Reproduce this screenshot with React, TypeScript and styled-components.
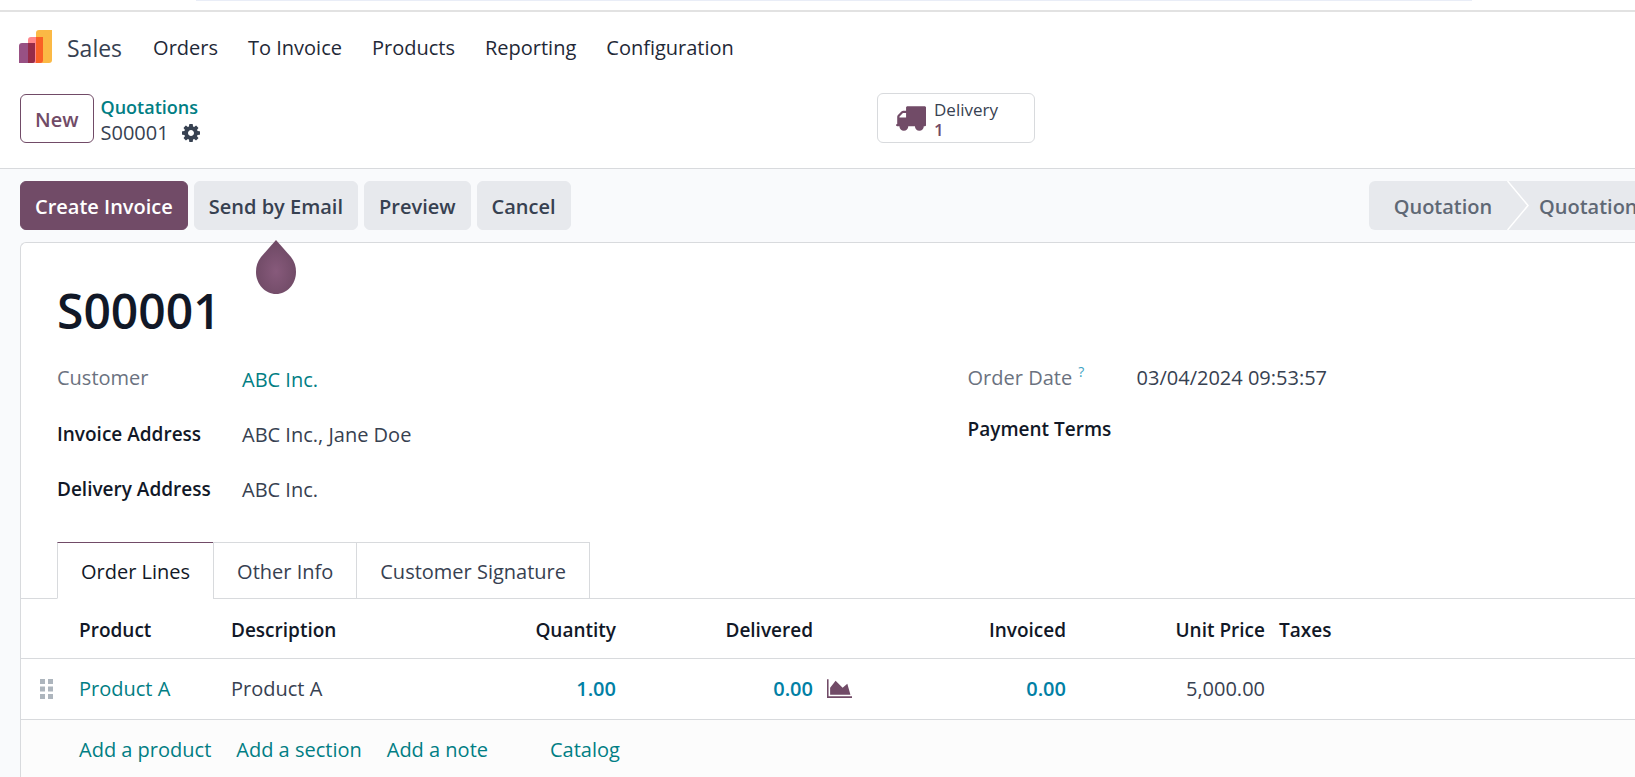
import React from "react";
import styled, { createGlobalStyle, css } from "styled-components";

const color = {
  brand: "#714b67",
  link: "#017e84",
  info: "#0180a5",
  text: "#374151",
  strong: "#111827",
  muted: "#6b7280",
  line: "#d8dadd",
  soft: "#e7e9ed",
  page: "#f9fafc",
};

const GlobalStyle = createGlobalStyle`
  *, *::before, *::after { box-sizing: border-box; }
  body {
    margin: 0;
    background: ${color.page};
    color: ${color.text};
    font-family: "Open Sans", "Noto Sans", sans-serif;
    font-size: 20px;
    line-height: 28px;
    overflow: hidden;
  }
  button { font: inherit; color: inherit; cursor: pointer; }
  a { color: ${color.link}; text-decoration: none; }
`;

const Page = styled.div`
  min-height: 100vh;
  display: flex;
  flex-direction: column;
  overflow: hidden;
`;

const BrowserEdge = styled.div`
  height: 12px;
  flex: none;
  padding: 0 10% 0 12%;
  background: #fff;
  border-bottom: 2px solid #e2e2e2;
`;

const AddressBar = styled.div`
  height: 1px;
  background: #e9edf7;
`;

const NavBar = styled.header`
  display: flex;
  align-items: center;
  height: 72px;
  padding: 0 19px;
  background: #fff;
`;

const AppName = styled.a`
  display: flex;
  align-items: center;
  gap: 15px;
  margin-right: 31px;
  color: ${color.text};
  font-size: 23px;
  svg { margin-bottom: 3px; }
`;

const Menu = styled.nav`
  display: flex;
  gap: 30px;
`;

const MenuItem = styled.button`
  padding: 0;
  border: 0;
  background: none;
  color: #1f2937;
  white-space: nowrap;
`;

const ControlPanel = styled.div`
  display: grid;
  grid-template-columns: 857fr 158px 580fr;
  align-items: start;
  height: 85px;
  padding: 9px 20px 0;
  background: #fff;
  border-bottom: 1px solid ${color.line};
`;

const Crumbs = styled.div`
  display: flex;
  gap: 7px;
  padding-top: 1px;
`;

const Button = styled.button<{ $kind?: "primary" | "outline" }>`
  height: 49px;
  padding: 2px 14px 0;
  border: 1px solid ${color.soft};
  border-radius: 6px;
  background: ${color.soft};
  font-weight: 600;
  white-space: nowrap;
  ${(p) =>
    p.$kind === "primary" &&
    css`
      background: ${color.brand};
      border-color: ${color.brand};
      color: #fff;
    `}
  ${(p) =>
    p.$kind === "outline" &&
    css`
      background: #fff;
      border-color: ${color.brand};
      color: ${color.brand};
    `}
`;

const Trail = styled.div`
  display: flex;
  flex-direction: column;
  line-height: 26px;
  a { font-size: 18px; font-weight: 600; }
`;

const Current = styled.div`
  display: flex;
  align-items: center;
  gap: 13px;
`;

const IconButton = styled.button`
  display: flex;
  padding: 0;
  border: 0;
  background: none;
`;

const ForecastButton = styled(IconButton)`
  color: ${color.brand};
`;

const StatButton = styled.button`
  display: flex;
  align-items: center;
  gap: 8px;
  height: 50px;
  padding: 0 17px;
  border: 1px solid ${color.line};
  border-radius: 6px;
  background: #fff;
  color: ${color.brand};
`;

const StatText = styled.span`
  display: flex;
  flex-direction: column;
  padding-top: 3px;
  text-align: left;
  font-size: 17px;
  line-height: 20px;
`;

const StatLabel = styled.span`
  color: ${color.text};
`;

const StatValue = styled.span`
  font-weight: 600;
`;

const ActionBar = styled.div`
  display: flex;
  justify-content: space-between;
  padding: 12px 0 12px 20px;
`;

const Actions = styled.div`
  display: flex;
  gap: 6px;
`;

const TipAnchor = styled.div`
  position: relative;
  display: flex;
`;

const Tip = styled.svg`
  position: absolute;
  top: 59px;
  left: 50%;
  margin-left: -20px;
`;

const StatusBar = styled.div`
  display: flex;
  width: 266px;
  overflow: hidden;
  background: ${color.soft};
  border-radius: 6px 0 0 6px;
`;

const StageArrow = styled.svg`
  flex: none;
`;

const Stage = styled.button`
  flex: none;
  padding: 2px 10px 0;
  border: 0;
  background: none;
  color: #5f6875;
  font-weight: 600;
`;

const StageFirst = styled(Stage)`
  width: 138px;
  padding: 2px 0 0 10px;
`;

const Sheet = styled.main`
  flex: 1;
  margin-left: 20px;
  background: #fff;
  border: 1px solid ${color.line};
  border-width: 1px 0 0 1px;
  border-radius: 6px 0 0 0;
`;

const Title = styled.h1`
  margin: 0;
  padding: 38px 36px 0;
  color: ${color.strong};
  font-size: 48px;
  line-height: 60px;
  font-weight: 600;
`;

const Fields = styled.div`
  display: grid;
  grid-template-columns: 910fr 667fr;
  padding: 23px 0 0 36px;
`;

const FieldList = styled.dl<{ $label: number; $gap: number }>`
  display: grid;
  grid-template-columns: ${(p) => p.$label}px 1fr;
  align-content: start;
  row-gap: ${(p) => p.$gap}px;
  margin: 0;
`;

const Label = styled.dt<{ $muted?: boolean }>`
  padding-top: ${(p) => (p.$muted ? 0 : 1)}px;
  color: ${(p) => (p.$muted ? color.muted : color.strong)};
  font-size: ${(p) => (p.$muted ? 20 : 19)}px;
  font-weight: ${(p) => (p.$muted ? 500 : 600)};
  white-space: nowrap;
`;

const Value = styled.dd`
  margin: 0;
`;

const Help = styled.sup`
  margin-left: 6px;
  color: #3ea3c3;
  font-size: 14px;
  line-height: 1;
`;

const CustomerFields = styled(FieldList)`
  ${Value} { padding-top: 2px; }
`;

const Tabs = styled.div`
  display: flex;
  margin-top: 38px;
  padding-left: 36px;
  border-bottom: 1px solid ${color.line};
`;

const Tab = styled.button<{ $active?: boolean }>`
  height: 57px;
  margin: 0 -1px -1px 0;
  padding: 2px 23px 0;
  border: 1px solid ${color.line};
  background: #fff;
  ${(p) =>
    p.$active &&
    css`
      border-top-color: ${color.brand};
      border-bottom-color: #fff;
      color: ${color.strong};
    `}
`;

const Lines = styled.table`
  width: 100%;
  table-layout: fixed;
  border-collapse: collapse;
`;

const Cell = styled.td<{ $right?: boolean; $metric?: boolean }>`
  height: 61px;
  padding: 0 7px;
  border-bottom: 1px solid ${color.line};
  text-align: ${(p) => (p.$right ? "right" : "left")};
  white-space: nowrap;
  ${(p) => p.$metric && css`color: ${color.info}; font-weight: 600;`}
`;

const HeadCell = styled(Cell).attrs({ as: "th" })`
  height: 59px;
  padding-top: 3px;
  color: ${color.strong};
  font-size: 19px;
  font-weight: 600;
`;

const Handle = styled.svg`
  display: block;
  margin-left: 12px;
`;

const AddRow = styled.div`
  display: flex;
  padding: 16px 58px;
  gap: 25px;
  background: #fcfcfc;
  white-space: nowrap;
  a:last-child { margin-left: 37px; }
`;

const TRUCK =
  "M640 128q0 -52 -38 -90t-90 -38t-90 38t-38 90t38 90t90 38t90 -38t38 -90zM256 640h384v256h-158q-13 0 -22 -9l-195 -195q-9 -9 -9 -22v-30zM1536 128q0 -52 -38 -90t-90 -38t-90 38t-38 90t38 90t90 38t90 -38t38 -90zM1792 1216v-1024q0 -15 -4 -26.500t-13.500 -18.500t-16.500 -11.500t-23.500 -6t-22.500 -2t-25.500 0t-22.500 0.500q0 -106 -75 -181t-181 -75t-181 75t-75 181h-384q0 -106 -75 -181t-181 -75t-181 75t-75 181h-64q-3 0 -22.500 -0.500t-25.500 0t-22.500 2t-23.500 6t-16.500 11.500t-13.500 18.500t-4 26.500q0 26 19 45t45 19v320q0 8 -0.500 35t0 38t2.500 34.500t6.500 37t14 30.500t22.500 30l198 198q19 19 50.500 32t58.500 13h160v192q0 26 19 45t45 19h1024q26 0 45 -19t19 -45z";
const COG =
  "M1024 640q0 106 -75 181t-181 75t-181 -75t-75 -181t75 -181t181 -75t181 75t75 181zM1536 749v-222q0 -12 -8 -23t-20 -13l-185 -28q-19 -54 -39 -91q35 -50 107 -138q10 -12 10 -25t-9 -23q-27 -37 -99 -108t-94 -71q-12 0 -26 9l-138 108q-44 -23 -91 -38q-16 -136 -29 -186q-7 -28 -36 -28h-222q-14 0 -24.500 8.500t-11.500 21.500l-28 184q-49 16 -90 37l-141 -107q-10 -9 -25 -9q-14 0 -25 11q-126 114 -165 168q-7 10 -7 23q0 12 8 23q15 21 51 66.500t54 70.500q-27 50 -41 99l-183 27q-13 2 -21 12.500t-8 23.500v222q0 12 8 23t19 13l186 28q14 46 39 92q-40 57 -107 138q-10 12 -10 24q0 10 9 23q26 36 98.500 107.500t94.500 71.500q13 0 26 -10l138 -107q44 23 91 38q16 136 29 186q7 28 36 28h222q14 0 24.500 -8.500t11.500 -21.500l28 -184q49 -16 90 -37l142 107q9 9 24 9q13 0 25 -10q129 -119 165 -170q7 -8 7 -22q0 -12 -8 -23q-15 -21 -51 -66.500t-54 -70.500q26 -50 41 -98l183 -28q13 -2 21 -12.500t8 -23.500z";
const AREA = "M2048 0v-128h-2048v1536h128v-1408h1920zM1664 1024l256 -896h-1664v576l448 576l576 -576z";

/* The icon outlines use a y-up grid, so each one is flipped into view. */
const Glyph = ({ d, box, w, h }: { d: string; box: string; w: number; h: number }) => (
  <svg width={w} height={h} viewBox={box} fill="currentColor" aria-hidden="true">
    <path d={d} transform="scale(1 -1)" />
  </svg>
);

const Logo = () => (
  <svg width="33" height="33" viewBox="0 0 33 33" aria-hidden="true">
    <path d="M20 0h13v30a3 3 0 0 1-3 3H17V3a3 3 0 0 1 3-3z" fill="#fbb945" />
    <path d="M12 7h12v23a3 3 0 0 1-3 3H9V10a3 3 0 0 1 3-3z" fill="#ff868b" />
    <path d="M3 13h13v17a3 3 0 0 1-3 3H0V16a3 3 0 0 1 3-3z" fill="#985184" />
    <path d="M9 13h7v17a3 3 0 0 1-3 3H9z" fill="#962b48" />
    <path d="M17 7h7v23a3 3 0 0 1-3 3h-4z" fill="#f96025" />
  </svg>
);

const menus = ["Orders", "To Invoice", "Products", "Reporting", "Configuration"];
const columns = [
  { name: "", width: 51 },
  { name: "Product", width: 152 },
  { name: "Description", width: 221 },
  { name: "Quantity", width: 178, right: true },
  { name: "Delivered", width: 197, right: true },
  { name: "", width: 54 },
  { name: "Invoiced", width: 199, right: true },
  { name: "Unit Price", width: 199, right: true },
  { name: "Taxes" },
];

export default function App() {
  return (
    <Page>
      <GlobalStyle />
      <BrowserEdge><AddressBar /></BrowserEdge>
      <NavBar>
        <AppName href="#sales"><Logo />Sales</AppName>
        <Menu>
          {menus.map((m) => <MenuItem key={m}>{m}</MenuItem>)}
        </Menu>
      </NavBar>
      <ControlPanel>
        <Crumbs>
          <Button $kind="outline">New</Button>
          <Trail>
            <a href="#quotations">Quotations</a>
            <Current>
              S00001
              <IconButton aria-label="Actions">
                <Glyph d={COG} box="0 -1408 1536 1536" w={18} h={18} />
              </IconButton>
            </Current>
          </Trail>
        </Crumbs>
        <StatButton>
          <Glyph d={TRUCK} box="0 -1280 1792 1408" w={31} h={25} />
          <StatText>
            <StatLabel>Delivery</StatLabel>
            <StatValue>1</StatValue>
          </StatText>
        </StatButton>
      </ControlPanel>
      <ActionBar>
        <Actions>
          <Button $kind="primary">Create Invoice</Button>
          <TipAnchor>
            <Button>Send by Email</Button>
            <Tip width="40" height="54" viewBox="0 0 40 54" aria-hidden="true">
              <defs>
                <radialGradient id="drop" cx="0.5" cy="0.58" r="0.5">
                  <stop offset="0" stopColor="#875a7b" />
                  <stop offset="1" stopColor="#714b67" />
                </radialGradient>
              </defs>
              <path d="M20 0L35 17C38.500 21.500 40 26 40 32C40 44 31 54 20 54S0 44 0 32C0 26 1.500 21.500 5 17Z" fill="url(#drop)" />
            </Tip>
          </TipAnchor>
          <Button>Preview</Button>
          <Button>Cancel</Button>
        </Actions>
        <StatusBar>
          <StageFirst>Quotation</StageFirst>
          <StageArrow width="22" height="49" viewBox="0 0 22 49" aria-hidden="true">
            <path d="M0.500 0L21 24.500L0.500 49" fill="none" stroke="#fff" strokeWidth="1.500" />
          </StageArrow>
          <Stage>Quotation</Stage>
        </StatusBar>
      </ActionBar>
      <Sheet>
        <Title>S00001</Title>
        <Fields>
          <CustomerFields $label={185} $gap={25}>
            <Label $muted>Customer</Label>
            <Value><a href="#customer">ABC Inc.</a></Value>
            <Label>Invoice Address</Label>
            <Value>ABC Inc., Jane Doe</Value>
            <Label>Delivery Address</Label>
            <Value>ABC Inc.</Value>
          </CustomerFields>
          <FieldList $label={169} $gap={22}>
            <Label $muted>Order Date<Help>?</Help></Label>
            <Value>03/04/2024 09:53:57</Value>
            <Label>Payment Terms</Label>
            <Value />
          </FieldList>
        </Fields>
        <Tabs role="tablist">
          <Tab role="tab" aria-selected="true" $active>Order Lines</Tab>
          <Tab role="tab">Other Info</Tab>
          <Tab role="tab">Customer Signature</Tab>
        </Tabs>
        <Lines>
          <colgroup>
            {columns.map((c, i) => <col key={i} width={c.width} />)}
          </colgroup>
          <thead>
            <tr>
              {columns.map((c, i) => <HeadCell key={i} $right={c.right}>{c.name}</HeadCell>)}
            </tr>
          </thead>
          <tbody>
            <tr>
              <Cell>
                <Handle width="13" height="20" viewBox="0 0 13 20" fill="#adb5bd" aria-hidden="true">
                  <path d="M0 0h5v5H0zM8 0h5v5H8zM0 7.500h5v5H0zM8 7.500h5v5H8zM0 15h5v5H0zM8 15h5v5H8z" />
                </Handle>
              </Cell>
              <Cell><a href="#product">Product A</a></Cell>
              <Cell>Product A</Cell>
              <Cell $right $metric>1.00</Cell>
              <Cell $right $metric>0.00</Cell>
              <Cell>
                <ForecastButton aria-label="Forecast">
                  <Glyph d={AREA} box="0 -1408 2048 1536" w={25} h={19} />
                </ForecastButton>
              </Cell>
              <Cell $right $metric>0.00</Cell>
              <Cell $right>5,000.00</Cell>
              <Cell />
            </tr>
          </tbody>
        </Lines>
        <AddRow>
          <a href="#add-product">Add a product</a>
          <a href="#add-section">Add a section</a>
          <a href="#add-note">Add a note</a>
          <a href="#catalog">Catalog</a>
        </AddRow>
      </Sheet>
    </Page>
  );
}
